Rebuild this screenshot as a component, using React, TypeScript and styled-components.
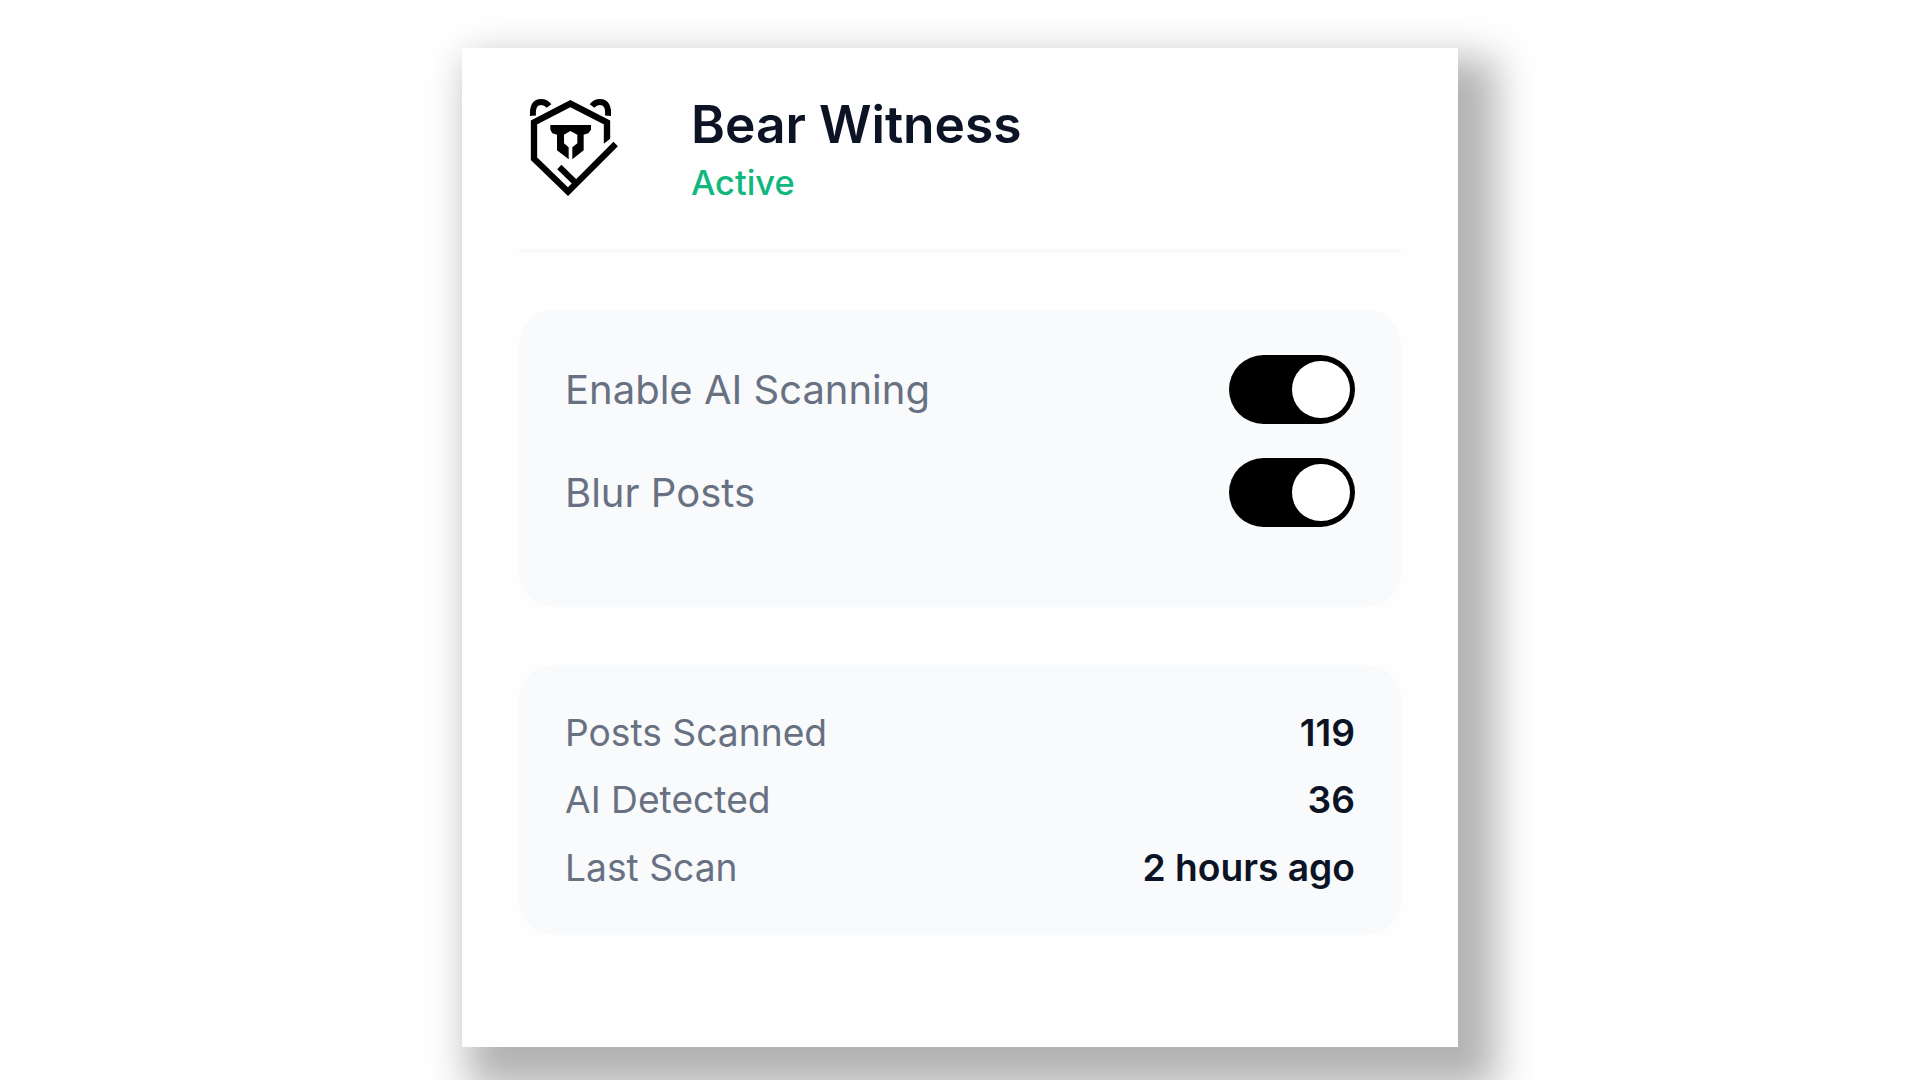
import React from "react";
import styled, { createGlobalStyle } from "styled-components";

const GlobalStyle = createGlobalStyle`
  *, *::before, *::after { box-sizing: border-box; }
  body {
    margin: 0;
    background: #ffffff;
    font-family: Inter, "Liberation Sans", sans-serif;
    font-optical-sizing: none;
    -webkit-font-smoothing: antialiased;
  }
`;

const Stage = styled.main`
  display: flex;
  justify-content: center;
  height: 1080px;
  padding-top: 48px;
  overflow: hidden;
`;

const Popup = styled.section`
  display: flex;
  flex-direction: column;
  width: 996px;
  height: 999px;
  padding: 33px 57px 0 57px;
  background: #fefefe;
  box-shadow: 22px 26px 38px 16px rgba(0, 0, 0, 0.3);
`;

const Header = styled.header`
  display: flex;
  align-items: center;
  gap: 34px;
  height: 171px;
  padding-bottom: 30px;
  border-bottom: 3px solid #f9f9fa;
`;

const Logo = styled.svg`
  width: 138px;
  height: 138px;
  flex: none;
`;

const Heading = styled.div`
  display: flex;
  flex-direction: column;
  padding-bottom: 4px;
`;

const Title = styled.h1`
  margin: 0;
  color: #0b1324;
  font-size: 51.5px;
  font-weight: 620;
  line-height: 62px;
`;

const Status = styled.span`
  color: #10b77f;
  font-size: 34.4px;
  font-weight: 500;
  line-height: 42px;
  margin-top: 7px;
`;

const Panel = styled.div<{ $height: number; $gap: number; $top: number; $inset: number }>`
  display: flex;
  flex-direction: column;
  gap: ${(p) => p.$gap}px;
  height: ${(p) => p.$height}px;
  margin-top: ${(p) => p.$top}px;
  padding: ${(p) => p.$inset}px 46px 0;
  border-radius: 34px;
  background: #f9fafc;
`;

const Row = styled.div<{ $height: number }>`
  display: flex;
  align-items: center;
  justify-content: space-between;
  height: ${(p) => p.$height}px;
`;

const Label = styled.span<{ $size: number }>`
  color: #687182;
  font-size: ${(p) => p.$size}px;
  font-weight: 425;
`;

const Value = styled.span`
  color: #0b1324;
  font-size: 37.2px;
  font-weight: 610;
`;

const Toggle = styled.button`
  display: flex;
  align-items: center;
  justify-content: flex-end;
  width: 126px;
  height: 69px;
  padding: 0 5.5px;
  border: 0;
  border-radius: 35px;
  background: #000000;
`;

const Knob = styled.span`
  width: 57.5px;
  height: 57.5px;
  border-radius: 50%;
  background: #ffffff;
`;

const settings = ["Enable AI Scanning", "Blur Posts"];

const stats = [
  { label: "Posts Scanned", value: "119" },
  { label: "AI Detected", value: "36" },
  { label: "Last Scan", value: "2 hours ago" },
];

function BearLogo() {
  return (
    <Logo viewBox="27 3 414 414" fill="none" stroke="#000" aria-label="Bear Witness logo">
      <path d="M69 107 C67 80 75 66 93 66 C103 66 110 69 117 78" strokeWidth="18" />
      <path d="M294 107 C296 80 288 66 270 66 C260 66 253 69 246 78" strokeWidth="18" />
      <path d="M317 192 L174 335 L72 236 V127 L181 71 L291 127 V170" strokeWidth="19" />
      <path d="M281.5 168 H300.5 V176 L281.5 191 Z" fill="#000" stroke="none" />
      <path d="M148 261 L194 306" strokeWidth="18" />
      <path
        d="M121 135 H243 V149 L235 160 L221 164 V211 L187 238 V202 L202 190 V164 L181 153 L162 164 V190 L176 202 V238 L141 211 V164 L127 160 L121 149 Z"
        fill="#000"
        stroke="none"
      />
    </Logo>
  );
}

export default function App() {
  return (
    <>
      <GlobalStyle />
      <Stage>
        <Popup>
          <Header>
            <BearLogo />
            <Heading>
              <Title>Bear Witness</Title>
              <Status>Active</Status>
            </Heading>
          </Header>
          <Panel $height={297.5} $gap={34} $top={57.5} $inset={45.5}>
            {settings.map((name) => (
              <Row key={name} $height={69}>
                <Label $size={40}>{name}</Label>
                <Toggle role="switch" aria-checked="true" aria-label={name}>
                  <Knob />
                </Toggle>
              </Row>
            ))}
          </Panel>
          <Panel $height={270} $gap={23} $top={58} $inset={45}>
            {stats.map((s) => (
              <Row key={s.label} $height={44.6}>
                <Label $size={37.2}>{s.label}</Label>
                <Value>{s.value}</Value>
              </Row>
            ))}
          </Panel>
        </Popup>
      </Stage>
    </>
  );
}
